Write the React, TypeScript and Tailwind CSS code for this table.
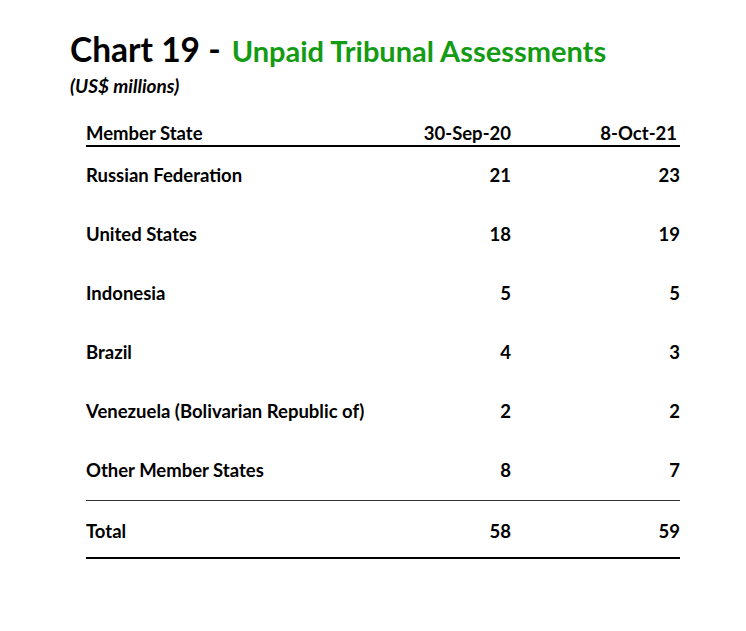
const rows = [
  { name: 'Russian Federation', a: '21', b: '23' },
  { name: 'United States', a: '18', b: '19' },
  { name: 'Indonesia', a: '5', b: '5' },
  { name: 'Brazil', a: '4', b: '3' },
  { name: 'Venezuela (Bolivarian Republic of)', a: '2', b: '2' },
  { name: 'Other Member States', a: '8', b: '7' },
];

export default function App() {
  return (
    <div className="min-h-screen w-[746px] bg-white text-black font-['Lato',sans-serif]">
      <div className="pl-[70px] pt-[33px]">
        <h1 className="font-bold leading-none flex items-baseline">
          <span className="text-[33.5px]">Chart 19 -</span>
          <span className="ml-[11px] text-[29px] text-[#149b14]">Unpaid Tribunal Assessments</span>
        </h1>
        <p className="mt-[9px] text-[19px] font-bold italic leading-none">(US$ millions)</p>
      </div>

      <div className="ml-[86px] mt-[25px] w-[594px] text-[18.5px] font-bold">
        <div className="grid grid-cols-[305px_120px_169px] items-end h-[27px] border-b-2 border-black">
          <span>Member State</span>
          <span className="text-right">30-Sep-20</span>
          <span className="text-right pr-[3px]">8-Oct-21</span>
        </div>
        {rows.map((r, i) => (
          <div
            key={r.name}
            className={
              'grid grid-cols-[305px_120px_169px] items-center h-[59px]' +
              (i === rows.length - 1 ? ' border-b-[1.5px] border-[#333]' : '')
            }
          >
            <span>{r.name}</span>
            <span className="text-right">{r.a}</span>
            <span className="text-right">{r.b}</span>
          </div>
        ))}
        <div className="grid grid-cols-[305px_120px_169px] items-center h-[58px] pt-[6px] border-b-2 border-black">
          <span>Total</span>
          <span className="text-right">58</span>
          <span className="text-right">59</span>
        </div>
      </div>
    </div>
  );
}
